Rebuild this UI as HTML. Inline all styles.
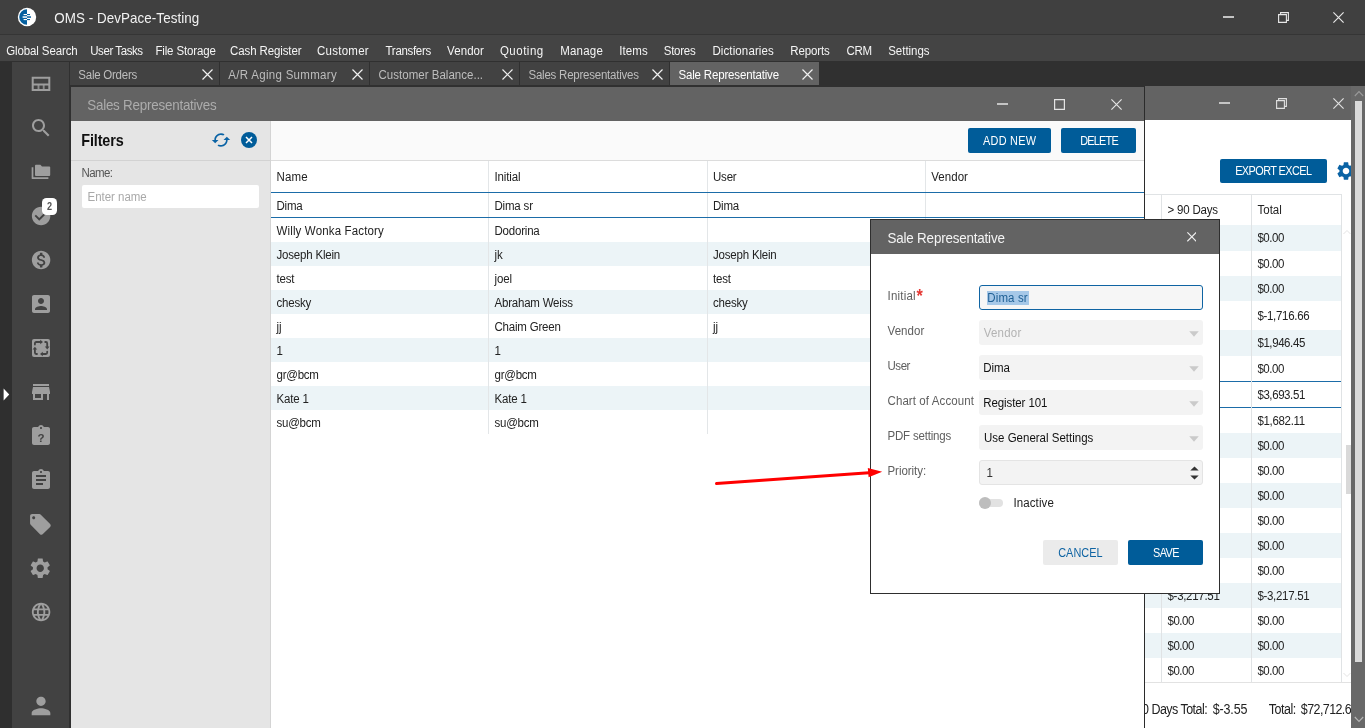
<!DOCTYPE html>
<html lang="en"><head><meta charset="utf-8"><title>OMS - DevPace-Testing</title>
<style>
html,body{margin:0;padding:0;}
html{background:#303030;}
body{width:1365px;height:728px;overflow:hidden;position:relative;background:#303030;font-family:"Liberation Sans",sans-serif;}
.layer{position:absolute;left:0;top:0;width:1365px;height:728px;overflow:hidden;will-change:transform;}
.r{position:absolute;display:block;}
.t{position:absolute;white-space:pre;line-height:20px;font-family:"Liberation Sans",sans-serif;}
</style></head>
<body>
<div class="layer" id="app-chrome">
<div class="r" style="left:0px;top:0px;width:1365px;height:34px;background:#404040;"></div>
<div class="r" style="left:0px;top:34px;width:1365px;height:1px;background:#353535;"></div>
<div class="r" style="left:0px;top:35px;width:1365px;height:26px;background:#444444;"></div>
<div class="r" style="left:0px;top:61px;width:1365px;height:667px;background:#303030;"></div>
<div class="r" style="left:0px;top:62px;width:12px;height:666px;background:#2f2f2f;"></div>
<div class="r" style="left:12px;top:62px;width:57px;height:666px;background:#424242;"></div>
<span class="t" style="left:54.2px;top:9.1px;font-size:13.4px;color:#f2f2f2;letter-spacing:0.07px;transform:scaleY(1.12);transform-origin:0 14.64px;">OMS - DevPace-Testing</span>
<span class="t" style="left:6.2px;top:41.0px;font-size:11.5px;color:#f5f5f5;letter-spacing:-0.11px;transform:scaleY(1.12);transform-origin:0 13.98px;">Global Search</span>
<span class="t" style="left:90.2px;top:41.0px;font-size:11.5px;color:#f5f5f5;letter-spacing:-0.42px;transform:scaleY(1.12);transform-origin:0 13.98px;">User Tasks</span>
<span class="t" style="left:155.4px;top:41.0px;font-size:11.5px;color:#f5f5f5;letter-spacing:-0.14px;transform:scaleY(1.12);transform-origin:0 13.98px;">File Storage</span>
<span class="t" style="left:230.1px;top:41.0px;font-size:11.5px;color:#f5f5f5;letter-spacing:-0.12px;transform:scaleY(1.12);transform-origin:0 13.98px;">Cash Register</span>
<span class="t" style="left:317.0px;top:41.0px;font-size:11.5px;color:#f5f5f5;letter-spacing:0.26px;transform:scaleY(1.12);transform-origin:0 13.98px;">Customer</span>
<span class="t" style="left:385.6px;top:41.0px;font-size:11.5px;color:#f5f5f5;letter-spacing:-0.32px;transform:scaleY(1.12);transform-origin:0 13.98px;">Transfers</span>
<span class="t" style="left:447.1px;top:41.0px;font-size:11.5px;color:#f5f5f5;letter-spacing:0.07px;transform:scaleY(1.12);transform-origin:0 13.98px;">Vendor</span>
<span class="t" style="left:499.9px;top:41.0px;font-size:11.5px;color:#f5f5f5;letter-spacing:0.50px;transform:scaleY(1.12);transform-origin:0 13.98px;">Quoting</span>
<span class="t" style="left:560.2px;top:41.0px;font-size:11.5px;color:#f5f5f5;letter-spacing:0.21px;transform:scaleY(1.12);transform-origin:0 13.98px;">Manage</span>
<span class="t" style="left:619.2px;top:41.0px;font-size:11.5px;color:#f5f5f5;letter-spacing:0.09px;transform:scaleY(1.12);transform-origin:0 13.98px;">Items</span>
<span class="t" style="left:663.8px;top:41.0px;font-size:11.5px;color:#f5f5f5;letter-spacing:-0.27px;transform:scaleY(1.12);transform-origin:0 13.98px;">Stores</span>
<span class="t" style="left:712.4px;top:41.0px;font-size:11.5px;color:#f5f5f5;letter-spacing:0.12px;transform:scaleY(1.12);transform-origin:0 13.98px;">Dictionaries</span>
<span class="t" style="left:790.3px;top:41.0px;font-size:11.5px;color:#f5f5f5;letter-spacing:-0.13px;transform:scaleY(1.12);transform-origin:0 13.98px;">Reports</span>
<span class="t" style="left:846.4px;top:41.0px;font-size:11.5px;color:#f5f5f5;letter-spacing:-0.27px;transform:scaleY(1.12);transform-origin:0 13.98px;">CRM</span>
<span class="t" style="left:888.2px;top:41.0px;font-size:11.5px;color:#f5f5f5;letter-spacing:-0.02px;transform:scaleY(1.12);transform-origin:0 13.98px;">Settings</span>
<div class="r" style="left:70px;top:62px;width:149px;height:23px;background:#424242;"></div>
<span class="t" style="left:78.3px;top:65.0px;font-size:11.5px;color:#bdbdbd;letter-spacing:-0.24px;transform:scaleY(1.12);transform-origin:0 13.98px;">Sale Orders</span>
<svg class="r" style="left:201.9px;top:68.5px" width="11" height="11" viewBox="0 0 11 11"><path d="M0.5 0.5L10.5 10.5M10.5 0.5L0.5 10.5" stroke="#f0f0f0" stroke-width="1.2" fill="none"/></svg>
<div class="r" style="left:220px;top:62px;width:149px;height:23px;background:#424242;"></div>
<span class="t" style="left:228.3px;top:65.0px;font-size:11.5px;color:#bdbdbd;letter-spacing:0.30px;transform:scaleY(1.12);transform-origin:0 13.98px;">A/R Aging Summary</span>
<svg class="r" style="left:351.9px;top:68.5px" width="11" height="11" viewBox="0 0 11 11"><path d="M0.5 0.5L10.5 10.5M10.5 0.5L0.5 10.5" stroke="#f0f0f0" stroke-width="1.2" fill="none"/></svg>
<div class="r" style="left:370px;top:62px;width:149px;height:23px;background:#424242;"></div>
<span class="t" style="left:378.5px;top:65.0px;font-size:11.5px;color:#bdbdbd;letter-spacing:0.02px;transform:scaleY(1.12);transform-origin:0 13.98px;">Customer Balance...</span>
<svg class="r" style="left:501.9px;top:68.5px" width="11" height="11" viewBox="0 0 11 11"><path d="M0.5 0.5L10.5 10.5M10.5 0.5L0.5 10.5" stroke="#f0f0f0" stroke-width="1.2" fill="none"/></svg>
<div class="r" style="left:520px;top:62px;width:149px;height:23px;background:#424242;"></div>
<span class="t" style="left:528.5px;top:65.0px;font-size:11.5px;color:#bdbdbd;letter-spacing:-0.23px;transform:scaleY(1.12);transform-origin:0 13.98px;">Sales Representatives</span>
<svg class="r" style="left:651.9px;top:68.5px" width="11" height="11" viewBox="0 0 11 11"><path d="M0.5 0.5L10.5 10.5M10.5 0.5L0.5 10.5" stroke="#f0f0f0" stroke-width="1.2" fill="none"/></svg>
<div class="r" style="left:670px;top:62px;width:149px;height:23px;background:#636363;"></div>
<span class="t" style="left:678.4px;top:65.0px;font-size:11.5px;color:#ffffff;letter-spacing:-0.16px;transform:scaleY(1.12);transform-origin:0 13.98px;">Sale Representative</span>
<svg class="r" style="left:801.9px;top:68.5px" width="11" height="11" viewBox="0 0 11 11"><path d="M0.5 0.5L10.5 10.5M10.5 0.5L0.5 10.5" stroke="#f0f0f0" stroke-width="1.2" fill="none"/></svg>
<div class="r" style="left:1223.2px;top:16.2px;width:10.5px;height:1.7px;background:#c4c4c4"></div>
<svg class="r" style="left:1278px;top:11.5px" width="11" height="11" viewBox="0 0 11 11"><path d="M0.6 2.6h7.8v7.8h-7.8z M2.6 2.6v-2h7.8v7.8h-2" stroke="#e8e8e8" stroke-width="1.1" fill="none"/></svg>
<svg class="r" style="left:1333.2px;top:11.5px" width="11" height="11" viewBox="0 0 11 11"><path d="M0.4 0.4L10.6 10.6M10.6 0.4L0.4 10.6" stroke="#e8e8e8" stroke-width="1.15" fill="none"/></svg>
<svg class="r" style="left:17px;top:7px" width="20" height="20" viewBox="0 0 20 20">
<circle cx="10" cy="10" r="9.2" fill="#fff"/>
<path d="M10 2.2A7.8 7.8 0 0 0 10 17.8Z" fill="#0560a0"/>
<rect x="6.6" y="7" width="3.4" height="1.1" fill="#fff"/><rect x="10" y="7" width="3" height="1.1" fill="#0560a0"/>
<rect x="5.6" y="9.3" width="4.4" height="1.5" fill="#fff"/><rect x="10" y="9.3" width="4" height="1.5" fill="#0560a0"/>
<rect x="6.6" y="12" width="3.4" height="1.1" fill="#fff"/><rect x="10" y="12" width="3" height="1.1" fill="#0560a0"/>
</svg>
<svg class="r" style="left:28.6px;top:72.0px" width="24" height="24" viewBox="0 0 24 24" fill="#9e9e9e"><path d="M3.7 5.8h16.6v12.3H3.7z M3.7 12.4h16.6" fill="none" stroke="#9e9e9e" stroke-width="2"/><path d="M9.5 12.4v5.7 M14.7 12.4v5.7" fill="none" stroke="#9e9e9e" stroke-width="1.9" opacity="0.8"/></svg>
<svg class="r" style="left:28.6px;top:116.0px" width="24" height="24" viewBox="0 0 24 24" fill="#9e9e9e"><path d="M15.5 14h-.79l-.28-.27C15.41 12.59 16 11.11 16 9.5 16 5.91 13.09 3 9.5 3S3 5.91 3 9.5 5.91 16 9.5 16c1.61 0 3.09-.59 4.23-1.57l.27.28v.79l5 4.99L20.49 19l-4.99-5zm-6 0C7.01 14 5 11.99 5 9.5S7.01 5 9.5 5 14 7.01 14 9.5 11.99 14 9.5 14z"/></svg>
<svg class="r" style="left:28.6px;top:160.0px" width="24" height="24" viewBox="0 0 24 24" fill="#9e9e9e"><path d="M3.5 7.2V18.2H19.4" fill="none" stroke="#9e9e9e" stroke-width="1.7" stroke-linejoin="round"/><path d="M6 5.7Q6 4.8 6.9 4.8H11.4L13 6.4H20.3Q21.2 6.4 21.2 7.3V15.1Q21.2 16 20.3 16H6.9Q6 16 6 15.1Z"/></svg>
<svg class="r" style="left:29.5px;top:204.9px" width="22.2" height="22.2" viewBox="0 0 24 24" fill="#9e9e9e"><path d="M12 2C6.48 2 2 6.48 2 12s4.48 10 10 10 10-4.48 10-10S17.52 2 12 2zm-2 15l-5-5 1.41-1.41L10 14.17l7.59-7.59L19 8l-9 9z"/></svg>
<svg class="r" style="left:29.5px;top:248.9px" width="22.2" height="22.2" viewBox="0 0 24 24" fill="#9e9e9e"><path d="M12 2C6.48 2 2 6.48 2 12s4.48 10 10 10 10-4.48 10-10S17.52 2 12 2zm1.41 16.09V20h-2.67v-1.93c-1.71-.36-3.16-1.46-3.27-3.4h1.96c.1 1.05.82 1.87 2.65 1.87 1.96 0 2.4-.98 2.4-1.59 0-.83-.44-1.61-2.67-2.14-2.48-.6-4.18-1.62-4.18-3.67 0-1.72 1.39-2.84 3.11-3.21V4h2.67v1.95c1.86.45 2.79 1.86 2.85 3.39H14.3c-.05-1.11-.64-1.87-2.22-1.87-1.5 0-2.4.68-2.4 1.64 0 .84.65 1.39 2.67 1.91s4.18 1.39 4.18 3.91c-.01 1.83-1.38 2.83-3.12 3.16z"/></svg>
<svg class="r" style="left:28.6px;top:292.0px" width="24" height="24" viewBox="0 0 24 24" fill="#9e9e9e"><path d="M3 5v14c0 1.1.89 2 2 2h14c1.1 0 2-.9 2-2V5c0-1.1-.9-2-2-2H5c-1.11 0-2 .9-2 2zm12 4c0 1.66-1.34 3-3 3s-3-1.34-3-3 1.34-3 3-3 3 1.34 3 3zm-9 8c0-2 4-3.1 6-3.1s6 1.1 6 3.1v1H6v-1z"/></svg>
<svg class="r" style="left:28.6px;top:336.0px" width="24" height="24" viewBox="0 0 24 24" fill="#9e9e9e"><rect x="3" y="3" width="18" height="18" rx="2"/><g stroke="#424242" stroke-width="1.8" fill="none" stroke-linecap="round" stroke-linejoin="round"><path d="M5.9 8.6V7.4Q5.9 6 7.3 6H11.4"/><path d="M16.2 6H16.9Q18.2 6 18.2 7.4V11"/><path d="M18.2 15.6V16.6Q18.2 18 16.8 18H13.6"/><path d="M8 18H7.3Q5.9 18 5.9 16.6V13.4"/></g><g fill="#424242"><path d="M11.2 3.7L14 6L11.2 8.3Z"/><path d="M15.9 10.6L18.2 13.4L20.5 10.6Z"/><path d="M13.8 15.7L11 18L13.8 20.3Z"/><path d="M3.6 13.6L5.9 10.8L8.2 13.6Z"/></g></svg>
<svg class="r" style="left:28.6px;top:380.0px" width="24" height="24" viewBox="0 0 24 24" fill="#9e9e9e"><path d="M20 4H4v2h16V4zm1 10v-2l-1-5H4l-1 5v2h1v6h10v-6h4v6h2v-6h1zm-9 4H6v-4h6v4z"/></svg>
<svg class="r" style="left:28.6px;top:424.0px" width="24" height="24" viewBox="0 0 24 24" fill="#9e9e9e"><path d="M19 3h-4.18C14.4 1.84 13.3 1 12 1c-1.3 0-2.4.84-2.82 2H5c-1.1 0-2 .9-2 2v14c0 1.1.9 2 2 2h14c1.1 0 2-.9 2-2V5c0-1.1-.9-2-2-2zm-7 0c.55 0 1 .45 1 1s-.45 1-1 1-1-.45-1-1 .45-1 1-1z"/><text x="12" y="17.6" text-anchor="middle" font-family="Liberation Sans, sans-serif" font-weight="700" font-size="11.5" fill="#424242">?</text></svg>
<svg class="r" style="left:28.6px;top:468.0px" width="24" height="24" viewBox="0 0 24 24" fill="#9e9e9e"><path d="M19 3h-4.18C14.4 1.84 13.3 1 12 1c-1.3 0-2.4.84-2.82 2H5c-1.1 0-2 .9-2 2v14c0 1.1.9 2 2 2h14c1.1 0 2-.9 2-2V5c0-1.1-.9-2-2-2zm-7 0c.55 0 1 .45 1 1s-.45 1-1 1-1-.45-1-1 .45-1 1-1zm2 14H7v-2h7v2zm3-4H7v-2h10v2zm0-4H7V7h10v2z"/></svg>
<svg class="r" style="left:28.2px;top:511.6px" width="24.8" height="24.8" viewBox="0 0 24 24" fill="#9e9e9e"><path d="M21.41 11.58l-9-9C12.05 2.22 11.55 2 11 2H4c-1.1 0-2 .9-2 2v7c0 .55.22 1.05.59 1.42l9 9c.36.36.86.58 1.41.58.55 0 1.05-.22 1.41-.59l7-7c.37-.36.59-.86.59-1.41 0-.55-.23-1.06-.59-1.42zM5.5 7C4.67 7 4 6.33 4 5.5S4.67 4 5.5 4 7 4.67 7 5.5 6.33 7 5.5 7z"/></svg>
<svg class="r" style="left:28.4px;top:555.8px" width="24.5" height="24.5" viewBox="0 0 24 24" fill="#9e9e9e"><path d="M19.14 12.94c.04-.3.06-.61.06-.94 0-.32-.02-.64-.07-.94l2.03-1.58c.18-.14.23-.41.12-.61l-1.92-3.32c-.12-.22-.37-.29-.59-.22l-2.39.96c-.5-.38-1.03-.7-1.62-.94l-.36-2.54c-.04-.24-.24-.41-.48-.41h-3.84c-.24 0-.43.17-.47.41l-.36 2.54c-.59.24-1.13.57-1.62.94l-2.39-.96c-.22-.08-.47 0-.59.22L2.74 8.87c-.12.21-.08.47.12.61l2.03 1.58c-.05.3-.09.63-.09.94s.02.64.07.94l-2.03 1.58c-.18.14-.23.41-.12.61l1.92 3.32c.12.22.37.29.59.22l2.39-.96c.5.38 1.03.7 1.62.94l.36 2.54c.05.24.24.41.48.41h3.84c.24 0 .44-.17.47-.41l.36-2.54c.59-.24 1.13-.56 1.62-.94l2.39.96c.22.08.47 0 .59-.22l1.92-3.32c.12-.22.07-.47-.12-.61l-2.01-1.58zM12 15.6c-1.98 0-3.6-1.62-3.6-3.6s1.62-3.6 3.6-3.6 3.6 1.62 3.6 3.6-1.62 3.6-3.6 3.6z"/></svg>
<svg class="r" style="left:29.5px;top:600.9px" width="22.2" height="22.2" viewBox="0 0 24 24" fill="#9e9e9e"><path d="M11.99 2C6.47 2 2 6.48 2 12s4.47 10 9.99 10C17.52 22 22 17.52 22 12S17.52 2 11.99 2zm6.93 6h-2.95c-.32-1.25-.78-2.45-1.38-3.56 1.84.63 3.37 1.91 4.33 3.56zM12 4.04c.83 1.2 1.48 2.53 1.91 3.96h-3.82c.43-1.43 1.08-2.76 1.91-3.96zM4.26 14C4.1 13.36 4 12.69 4 12s.1-1.36.26-2h3.38c-.08.66-.14 1.32-.14 2 0 .68.06 1.34.14 2H4.26zm.82 2h2.95c.32 1.25.78 2.45 1.38 3.56-1.84-.63-3.37-1.9-4.33-3.56zm2.95-8H5.08c.96-1.66 2.49-2.93 4.33-3.56C8.81 5.55 8.35 6.75 8.03 8zM12 19.96c-.83-1.2-1.48-2.53-1.91-3.96h3.82c-.43 1.43-1.08 2.76-1.91 3.96zM14.34 14H9.66c-.09-.66-.16-1.32-.16-2 0-.68.07-1.35.16-2h4.68c.09.65.16 1.32.16 2 0 .68-.07 1.34-.16 2zm.25 5.56c.6-1.11 1.06-2.31 1.38-3.56h2.95c-.96 1.65-2.49 2.93-4.33 3.56zM16.36 14c.08-.66.14-1.32.14-2 0-.68-.06-1.34-.14-2h3.38c.16.64.26 1.31.26 2s-.1 1.36-.26 2h-3.38z"/></svg>
<svg class="r" style="left:26.7px;top:692.0px" width="28" height="28" viewBox="0 0 24 24" fill="#9e9e9e"><path d="M12 12c2.21 0 4-1.79 4-4s-1.79-4-4-4-4 1.79-4 4 1.79 4 4 4zm0 2c-2.67 0-8 1.34-8 4v2h16v-2c0-2.66-5.33-4-8-4z"/></svg>
<div class="r" style="left:42px;top:198px;width:15px;height:17px;background:#ffffff;border-radius:4.5px;"></div>
<span class="t" style="left:47.1px;top:196.6px;font-size:9.1px;color:#555;letter-spacing:-0.26px;font-weight:700;transform:scaleY(1.12);transform-origin:0 13.15px;">2</span>
<svg class="r" style="left:2.5px;top:388px" width="7" height="13" viewBox="0 0 7 13"><path d="M0.6 0.6L6.2 6.5L0.6 12.4Z" fill="#fff"/></svg>
</div>
<div class="layer" id="window-aging">
<div class="r" style="left:1145px;top:86px;width:207px;height:642px;background:#ffffff;"></div>
<div class="r" style="left:1145px;top:86px;width:207px;height:34px;background:#636363;"></div>
<div class="r" style="left:1219.3px;top:102.2px;width:10.5px;height:1.7px;background:#c4c4c4"></div>
<svg class="r" style="left:1276.2px;top:97.5px" width="11" height="11" viewBox="0 0 11 11"><path d="M0.6 2.6h7.8v7.8h-7.8z M2.6 2.6v-2h7.8v7.8h-2" stroke="#e0e0e0" stroke-width="1.1" fill="none"/></svg>
<svg class="r" style="left:1333.4px;top:97.5px" width="11" height="11" viewBox="0 0 11 11"><path d="M0.4 0.4L10.6 10.6M10.6 0.4L0.4 10.6" stroke="#e0e0e0" stroke-width="1.15" fill="none"/></svg>
<div class="r" style="left:1220px;top:158.6px;width:107px;height:24.5px;background:#005c99;border-radius:2px;"></div>
<span class="t" style="left:1235.2px;top:161.1px;font-size:10.9px;color:#fff;letter-spacing:-0.58px;transform:scaleY(1.12);transform-origin:0 13.78px;">EXPORT EXCEL</span>
<svg class="r" style="left:1334.5px;top:160.0px" width="22" height="22" viewBox="0 0 24 24" fill="#0a63a5"><path d="M19.14 12.94c.04-.3.06-.61.06-.94 0-.32-.02-.64-.07-.94l2.03-1.58c.18-.14.23-.41.12-.61l-1.92-3.32c-.12-.22-.37-.29-.59-.22l-2.39.96c-.5-.38-1.03-.7-1.62-.94l-.36-2.54c-.04-.24-.24-.41-.48-.41h-3.84c-.24 0-.43.17-.47.41l-.36 2.54c-.59.24-1.13.57-1.62.94l-2.39-.96c-.22-.08-.47 0-.59.22L2.74 8.87c-.12.21-.08.47.12.61l2.03 1.58c-.05.3-.09.63-.09.94s.02.64.07.94l-2.03 1.58c-.18.14-.23.41-.12.61l1.92 3.32c.12.22.37.29.59.22l2.39-.96c.5.38 1.03.7 1.62.94l.36 2.54c.05.24.24.41.48.41h3.84c.24 0 .44-.17.47-.41l.36-2.54c.59-.24 1.13-.56 1.62-.94l2.39.96c.22.08.47 0 .59-.22l1.92-3.32c.12-.22.07-.47-.12-.61l-2.01-1.58zM12 15.6c-1.98 0-3.6-1.62-3.6-3.6s1.62-3.6 3.6-3.6 3.6 1.62 3.6 3.6-1.62 3.6-3.6 3.6z"/></svg>
<div class="r" style="left:1145px;top:194px;width:197px;height:1px;background:#e0e3e5;"></div>
<div class="r" style="left:1145px;top:225px;width:197px;height:1px;background:#e0e3e5;"></div>
<div class="r" style="left:1145px;top:225px;width:197px;height:26px;background:#ecf4f7;"></div>
<span class="t" style="left:1257.4px;top:228.4px;font-size:11.5px;color:#222;letter-spacing:-0.46px;transform:scaleY(1.12);transform-origin:0 13.98px;">$0.00</span>
<span class="t" style="left:1257.4px;top:253.9px;font-size:11.5px;color:#222;letter-spacing:-0.46px;transform:scaleY(1.12);transform-origin:0 13.98px;">$0.00</span>
<div class="r" style="left:1145px;top:276px;width:197px;height:25px;background:#ecf4f7;"></div>
<span class="t" style="left:1257.4px;top:278.9px;font-size:11.5px;color:#222;letter-spacing:-0.46px;transform:scaleY(1.12);transform-origin:0 13.98px;">$0.00</span>
<span class="t" style="left:1257.4px;top:305.9px;font-size:11.5px;color:#222;letter-spacing:-0.30px;transform:scaleY(1.12);transform-origin:0 13.98px;">$-1,716.66</span>
<div class="r" style="left:1145px;top:330px;width:197px;height:26px;background:#ecf4f7;"></div>
<span class="t" style="left:1257.4px;top:333.4px;font-size:11.5px;color:#222;letter-spacing:-0.41px;transform:scaleY(1.12);transform-origin:0 13.98px;">$1,946.45</span>
<span class="t" style="left:1257.4px;top:358.9px;font-size:11.5px;color:#222;letter-spacing:-0.46px;transform:scaleY(1.12);transform-origin:0 13.98px;">$0.00</span>
<div class="r" style="left:1145px;top:381px;width:197px;height:1px;background:#1b6ca8;"></div>
<div class="r" style="left:1145px;top:407px;width:197px;height:1px;background:#1b6ca8;"></div>
<span class="t" style="left:1257.4px;top:384.9px;font-size:11.5px;color:#222;letter-spacing:-0.41px;transform:scaleY(1.12);transform-origin:0 13.98px;">$3,693.51</span>
<span class="t" style="left:1257.4px;top:410.9px;font-size:11.5px;color:#222;letter-spacing:-0.31px;transform:scaleY(1.12);transform-origin:0 13.98px;">$1,682.11</span>
<div class="r" style="left:1145px;top:433px;width:197px;height:25px;background:#ecf4f7;"></div>
<span class="t" style="left:1257.4px;top:435.9px;font-size:11.5px;color:#222;letter-spacing:-0.46px;transform:scaleY(1.12);transform-origin:0 13.98px;">$0.00</span>
<span class="t" style="left:1257.4px;top:460.9px;font-size:11.5px;color:#222;letter-spacing:-0.46px;transform:scaleY(1.12);transform-origin:0 13.98px;">$0.00</span>
<div class="r" style="left:1145px;top:483px;width:197px;height:25px;background:#ecf4f7;"></div>
<span class="t" style="left:1257.4px;top:485.9px;font-size:11.5px;color:#222;letter-spacing:-0.46px;transform:scaleY(1.12);transform-origin:0 13.98px;">$0.00</span>
<span class="t" style="left:1257.4px;top:510.9px;font-size:11.5px;color:#222;letter-spacing:-0.46px;transform:scaleY(1.12);transform-origin:0 13.98px;">$0.00</span>
<div class="r" style="left:1145px;top:533px;width:197px;height:25px;background:#ecf4f7;"></div>
<span class="t" style="left:1257.4px;top:535.9px;font-size:11.5px;color:#222;letter-spacing:-0.46px;transform:scaleY(1.12);transform-origin:0 13.98px;">$0.00</span>
<span class="t" style="left:1257.4px;top:560.9px;font-size:11.5px;color:#222;letter-spacing:-0.46px;transform:scaleY(1.12);transform-origin:0 13.98px;">$0.00</span>
<div class="r" style="left:1145px;top:583px;width:197px;height:25px;background:#ecf4f7;"></div>
<span class="t" style="left:1257.4px;top:585.9px;font-size:11.5px;color:#222;letter-spacing:-0.30px;transform:scaleY(1.12);transform-origin:0 13.98px;">$-3,217.51</span>
<span class="t" style="left:1167.5px;top:585.9px;font-size:11.5px;color:#222;letter-spacing:-0.30px;transform:scaleY(1.12);transform-origin:0 13.98px;">$-3,217.51</span>
<span class="t" style="left:1257.4px;top:610.9px;font-size:11.5px;color:#222;letter-spacing:-0.46px;transform:scaleY(1.12);transform-origin:0 13.98px;">$0.00</span>
<span class="t" style="left:1167.5px;top:610.9px;font-size:11.5px;color:#222;letter-spacing:-0.46px;transform:scaleY(1.12);transform-origin:0 13.98px;">$0.00</span>
<div class="r" style="left:1145px;top:633px;width:197px;height:25px;background:#ecf4f7;"></div>
<span class="t" style="left:1257.4px;top:635.9px;font-size:11.5px;color:#222;letter-spacing:-0.46px;transform:scaleY(1.12);transform-origin:0 13.98px;">$0.00</span>
<span class="t" style="left:1167.5px;top:635.9px;font-size:11.5px;color:#222;letter-spacing:-0.46px;transform:scaleY(1.12);transform-origin:0 13.98px;">$0.00</span>
<span class="t" style="left:1257.4px;top:660.9px;font-size:11.5px;color:#222;letter-spacing:-0.46px;transform:scaleY(1.12);transform-origin:0 13.98px;">$0.00</span>
<span class="t" style="left:1167.5px;top:660.9px;font-size:11.5px;color:#222;letter-spacing:-0.46px;transform:scaleY(1.12);transform-origin:0 13.98px;">$0.00</span>
<div class="r" style="left:1161px;top:194px;width:1px;height:489px;background:#e0e3e5;"></div>
<div class="r" style="left:1251px;top:194px;width:1px;height:489px;background:#e0e3e5;"></div>
<div class="r" style="left:1341px;top:194px;width:1px;height:489px;background:#e0e3e5;"></div>
<div class="r" style="left:1145px;top:682px;width:207px;height:1px;background:#e2e2e2;"></div>
<span class="t" style="left:1167.4px;top:200.3px;font-size:11.5px;color:#222;letter-spacing:-0.18px;transform:scaleY(1.12);transform-origin:0 13.98px;">&gt; 90 Days</span>
<span class="t" style="left:1257.5px;top:200.3px;font-size:11.5px;color:#222;letter-spacing:0.00px;transform:scaleY(1.12);transform-origin:0 13.98px;">Total</span>
<span class="t" style="left:1135.6px;top:699.9px;font-size:12.5px;color:#222;letter-spacing:-0.53px;transform:scaleY(1.12);transform-origin:0 14.33px;">90 Days Total:</span>
<span class="t" style="left:1212.7px;top:699.9px;font-size:12.5px;color:#222;letter-spacing:-0.14px;transform:scaleY(1.12);transform-origin:0 14.33px;">$-3.55</span>
<span class="t" style="left:1268.8px;top:699.9px;font-size:12.5px;color:#222;letter-spacing:-0.50px;transform:scaleY(1.12);transform-origin:0 14.33px;">Total:</span>
<span class="t" style="left:1300.8px;top:699.9px;font-size:12.5px;color:#222;letter-spacing:-0.59px;transform:scaleY(1.12);transform-origin:0 14.33px;">$72,712.65</span>
<div class="r" style="left:1346px;top:445px;width:5.5px;height:49px;background:#d9d9d9;"></div>
<svg class="r" style="left:1343px;top:229px" width="8" height="6" viewBox="0 0 8 6"><path d="M0.5 5L4 1.5L7.5 5" stroke="#e3e3e3" stroke-width="1" fill="none"/></svg>
<svg class="r" style="left:1343px;top:672px" width="8" height="6" viewBox="0 0 8 6"><path d="M0.5 1L4 4.5L7.5 1" stroke="#e3e3e3" stroke-width="1" fill="none"/></svg>
</div>
<div class="layer" id="main-scrollbar">
<div class="r" style="left:1351px;top:86px;width:14px;height:642px;background:#686868;"></div>
<div class="r" style="left:1355px;top:101px;width:7px;height:561px;background:#dadada;"></div>
<svg class="r" style="left:1353.5px;top:90px" width="10" height="7" viewBox="0 0 10 7"><path d="M0.8 6L5 1.6L9.2 6" stroke="#9a9a9a" stroke-width="1.1" fill="none"/></svg>
<svg class="r" style="left:1353.5px;top:716px" width="10" height="7" viewBox="0 0 10 7"><path d="M0.8 1L5 5.4L9.2 1" stroke="#b5b5b5" stroke-width="1.1" fill="none"/></svg>
</div>
<div class="layer" id="window-salesreps">
<div class="r" style="left:71px;top:87px;width:1073px;height:641px;background:#ffffff;"></div>
<div class="r" style="left:1144px;top:86px;width:1px;height:642px;background:#2b2b2b;"></div>
<div class="r" style="left:71px;top:87px;width:1073px;height:34px;background:#636363;"></div>
<span class="t" style="left:87.2px;top:96.0px;font-size:13.4px;color:#acacac;letter-spacing:-0.22px;transform:scaleY(1.12);transform-origin:0 14.64px;">Sales Representatives</span>
<div class="r" style="left:997.3px;top:103.2px;width:10.5px;height:1.7px;background:#c4c4c4"></div>
<svg class="r" style="left:1053.8px;top:98.5px" width="11" height="11" viewBox="0 0 11 11"><path d="M0.6 0.6h9.8v9.8h-9.8z" stroke="#e4e4e4" stroke-width="1.2" fill="none"/></svg>
<svg class="r" style="left:1111.2px;top:98.5px" width="11" height="11" viewBox="0 0 11 11"><path d="M0.4 0.4L10.6 10.6M10.6 0.4L0.4 10.6" stroke="#e4e4e4" stroke-width="1.15" fill="none"/></svg>
<div class="r" style="left:71px;top:121px;width:199px;height:607px;background:#e5e5e5;"></div>
<div class="r" style="left:270px;top:121px;width:1px;height:607px;background:#d4d4d4;"></div>
<div class="r" style="left:71px;top:160px;width:199px;height:1px;background:#d2d2d2;"></div>
<span class="t" style="left:81.2px;top:131.0px;font-size:14.4px;color:#111;letter-spacing:-0.10px;font-weight:700;transform:scaleY(1.12);transform-origin:0 14.99px;">Filters</span>
<svg class="r" style="left:211px;top:130px" width="20" height="20" viewBox="0 0 24 24" fill="#0a63a5"><path d="M12 4V1L8 5l4 4V6c3.31 0 6 2.69 6 6 0 1.01-.25 1.97-.7 2.8l1.46 1.46C19.54 15.03 20 13.57 20 12c0-4.42-3.58-8-8-8zm0 14c-3.31 0-6-2.69-6-6 0-1.01.25-1.97.7-2.8L5.24 7.74C4.46 8.97 4 10.43 4 12c0 4.42 3.58 8 8 8v3l4-4-4-4v3z" transform="rotate(90 12 12)"/></svg>
<svg class="r" style="left:241px;top:132px" width="16" height="16" viewBox="0 0 16 16"><circle cx="8" cy="8" r="8" fill="#005c99"/><path d="M5 5L11 11M11 5L5 11" stroke="#fff" stroke-width="1.5" fill="none"/></svg>
<span class="t" style="left:81.4px;top:163.0px;font-size:11.5px;color:#555;letter-spacing:-0.56px;transform:scaleY(1.12);transform-origin:0 13.98px;">Name:</span>
<div class="r" style="left:82px;top:185px;width:177px;height:23px;background:#ffffff;border-radius:2px;"></div>
<span class="t" style="left:87.5px;top:187.4px;font-size:11.5px;color:#a9a9a9;letter-spacing:-0.02px;transform:scaleY(1.12);transform-origin:0 13.98px;">Enter name</span>
<div class="r" style="left:271px;top:121px;width:873px;height:39px;background:#fafafa;"></div>
<div class="r" style="left:271px;top:160px;width:873px;height:1px;background:#dcdcdc;"></div>
<div class="r" style="left:968px;top:128px;width:83px;height:25px;background:#005c99;border-radius:2px;"></div>
<div class="r" style="left:1061px;top:128px;width:75px;height:25px;background:#005c99;border-radius:2px;"></div>
<span class="t" style="left:983.0px;top:130.8px;font-size:10.9px;color:#fff;letter-spacing:0.27px;transform:scaleY(1.12);transform-origin:0 13.78px;">ADD NEW</span>
<span class="t" style="left:1080.2px;top:130.8px;font-size:10.9px;color:#fff;letter-spacing:-0.76px;transform:scaleY(1.12);transform-origin:0 13.78px;">DELETE</span>
<div class="r" style="left:271px;top:242px;width:873px;height:24px;background:#ecf4f7"></div>
<div class="r" style="left:271px;top:290px;width:873px;height:24px;background:#ecf4f7"></div>
<div class="r" style="left:271px;top:338px;width:873px;height:24px;background:#ecf4f7"></div>
<div class="r" style="left:271px;top:386px;width:873px;height:24px;background:#ecf4f7"></div>
<div class="r" style="left:488px;top:161px;width:1px;height:273px;background:#e3e6e8;"></div>
<div class="r" style="left:707px;top:161px;width:1px;height:273px;background:#e3e6e8;"></div>
<div class="r" style="left:925px;top:161px;width:1px;height:273px;background:#e3e6e8;"></div>
<span class="t" style="left:276.5px;top:167.0px;font-size:11.5px;color:#222;letter-spacing:0.15px;transform:scaleY(1.12);transform-origin:0 13.98px;">Name</span>
<span class="t" style="left:494.5px;top:167.0px;font-size:11.5px;color:#222;letter-spacing:-0.13px;transform:scaleY(1.12);transform-origin:0 13.98px;">Initial</span>
<span class="t" style="left:713.0px;top:167.0px;font-size:11.5px;color:#222;letter-spacing:-0.21px;transform:scaleY(1.12);transform-origin:0 13.98px;">User</span>
<span class="t" style="left:931.2px;top:167.0px;font-size:11.5px;color:#222;letter-spacing:0.06px;transform:scaleY(1.12);transform-origin:0 13.98px;">Vendor</span>
<div class="r" style="left:271px;top:192px;width:873px;height:1px;background:#1b6ca8;"></div>
<div class="r" style="left:271px;top:217px;width:873px;height:1px;background:#1b6ca8;"></div>
<span class="t" style="left:276.5px;top:196.0px;font-size:11.5px;color:#222;letter-spacing:-0.23px;transform:scaleY(1.12);transform-origin:0 13.98px;">Dima</span>
<span class="t" style="left:494.5px;top:196.0px;font-size:11.5px;color:#222;letter-spacing:-0.19px;transform:scaleY(1.12);transform-origin:0 13.98px;">Dima sr</span>
<span class="t" style="left:713.0px;top:196.0px;font-size:11.5px;color:#222;letter-spacing:-0.23px;transform:scaleY(1.12);transform-origin:0 13.98px;">Dima</span>
<span class="t" style="left:276.5px;top:220.5px;font-size:11.5px;color:#222;letter-spacing:0.15px;transform:scaleY(1.12);transform-origin:0 13.98px;">Willy Wonka Factory</span>
<span class="t" style="left:494.5px;top:220.5px;font-size:11.5px;color:#222;letter-spacing:-0.20px;transform:scaleY(1.12);transform-origin:0 13.98px;">Dodorina</span>
<span class="t" style="left:276.5px;top:244.5px;font-size:11.5px;color:#222;letter-spacing:-0.19px;transform:scaleY(1.12);transform-origin:0 13.98px;">Joseph Klein</span>
<span class="t" style="left:494.5px;top:244.5px;font-size:11.5px;color:#222;letter-spacing:-0.14px;transform:scaleY(1.12);transform-origin:0 13.98px;">jk</span>
<span class="t" style="left:713.0px;top:244.5px;font-size:11.5px;color:#222;letter-spacing:-0.19px;transform:scaleY(1.12);transform-origin:0 13.98px;">Joseph Klein</span>
<span class="t" style="left:276.5px;top:268.5px;font-size:11.5px;color:#222;letter-spacing:-0.16px;transform:scaleY(1.12);transform-origin:0 13.98px;">test</span>
<span class="t" style="left:494.5px;top:268.5px;font-size:11.5px;color:#222;letter-spacing:-0.15px;transform:scaleY(1.12);transform-origin:0 13.98px;">joel</span>
<span class="t" style="left:713.0px;top:268.5px;font-size:11.5px;color:#222;letter-spacing:-0.16px;transform:scaleY(1.12);transform-origin:0 13.98px;">test</span>
<span class="t" style="left:276.5px;top:292.5px;font-size:11.5px;color:#222;letter-spacing:-0.20px;transform:scaleY(1.12);transform-origin:0 13.98px;">chesky</span>
<span class="t" style="left:494.5px;top:292.5px;font-size:11.5px;color:#222;letter-spacing:-0.21px;transform:scaleY(1.12);transform-origin:0 13.98px;">Abraham Weiss</span>
<span class="t" style="left:713.0px;top:292.5px;font-size:11.5px;color:#222;letter-spacing:-0.20px;transform:scaleY(1.12);transform-origin:0 13.98px;">chesky</span>
<span class="t" style="left:276.5px;top:316.5px;font-size:11.5px;color:#222;letter-spacing:-0.09px;transform:scaleY(1.12);transform-origin:0 13.98px;">jj</span>
<span class="t" style="left:494.5px;top:316.5px;font-size:11.5px;color:#222;letter-spacing:-0.21px;transform:scaleY(1.12);transform-origin:0 13.98px;">Chaim Green</span>
<span class="t" style="left:713.0px;top:316.5px;font-size:11.5px;color:#222;letter-spacing:-0.09px;transform:scaleY(1.12);transform-origin:0 13.98px;">jj</span>
<span class="t" style="left:276.5px;top:340.5px;font-size:11.5px;color:#222;letter-spacing:-0.22px;transform:scaleY(1.12);transform-origin:0 13.98px;">1</span>
<span class="t" style="left:494.5px;top:340.5px;font-size:11.5px;color:#222;letter-spacing:-0.22px;transform:scaleY(1.12);transform-origin:0 13.98px;">1</span>
<span class="t" style="left:276.5px;top:364.5px;font-size:11.5px;color:#222;letter-spacing:-0.25px;transform:scaleY(1.12);transform-origin:0 13.98px;">gr@bcm</span>
<span class="t" style="left:494.5px;top:364.5px;font-size:11.5px;color:#222;letter-spacing:-0.25px;transform:scaleY(1.12);transform-origin:0 13.98px;">gr@bcm</span>
<span class="t" style="left:276.5px;top:388.5px;font-size:11.5px;color:#222;letter-spacing:-0.19px;transform:scaleY(1.12);transform-origin:0 13.98px;">Kate 1</span>
<span class="t" style="left:494.5px;top:388.5px;font-size:11.5px;color:#222;letter-spacing:-0.19px;transform:scaleY(1.12);transform-origin:0 13.98px;">Kate 1</span>
<span class="t" style="left:276.5px;top:412.5px;font-size:11.5px;color:#222;letter-spacing:-0.26px;transform:scaleY(1.12);transform-origin:0 13.98px;">su@bcm</span>
<span class="t" style="left:494.5px;top:412.5px;font-size:11.5px;color:#222;letter-spacing:-0.26px;transform:scaleY(1.12);transform-origin:0 13.98px;">su@bcm</span>
</div>
<div class="layer" id="dialog-salerep">
<div class="r" style="left:870px;top:219px;width:350px;height:375px;background:#ffffff;border:1px solid #2e2e2e;box-sizing:border-box;"></div>
<div class="r" style="left:871px;top:220px;width:348px;height:34px;background:#636363;"></div>
<span class="t" style="left:887.5px;top:228.7px;font-size:13.4px;color:#f4f4f4;letter-spacing:-0.18px;transform:scaleY(1.12);transform-origin:0 14.64px;">Sale Representative</span>
<svg class="r" style="left:1186.9px;top:232.3px" width="9.6" height="9.6" viewBox="0 0 11 11"><path d="M0.4 0.4L10.6 10.6M10.6 0.4L0.4 10.6" stroke="#f0f0f0" stroke-width="1.3" fill="none"/></svg>
<span class="t" style="left:887.5px;top:286.3px;font-size:11.5px;color:#5e5e5e;letter-spacing:0.21px;transform:scaleY(1.12);transform-origin:0 13.98px;">Initial</span>
<div class="r" style="left:979px;top:285px;width:224px;height:25px;background:#f6f6f6;border:1.5px solid #0f64a3;border-radius:3px;box-sizing:border-box;"></div>
<span class="t" style="left:887.5px;top:321.3px;font-size:11.5px;color:#5e5e5e;letter-spacing:0.09px;transform:scaleY(1.12);transform-origin:0 13.98px;">Vendor</span>
<div class="r" style="left:979px;top:320px;width:224px;height:25px;background:#f3f3f3;border-radius:3px;"></div>
<svg class="r" style="left:1189px;top:330.8px" width="10" height="6" viewBox="0 0 10 6"><path d="M0.2 0.3H9.8L5 5.8Z" fill="#cacaca"/></svg>
<span class="t" style="left:887.5px;top:356.3px;font-size:11.5px;color:#5e5e5e;letter-spacing:-0.45px;transform:scaleY(1.12);transform-origin:0 13.98px;">User</span>
<div class="r" style="left:979px;top:355px;width:224px;height:25px;background:#f3f3f3;border-radius:3px;"></div>
<svg class="r" style="left:1189px;top:365.8px" width="10" height="6" viewBox="0 0 10 6"><path d="M0.2 0.3H9.8L5 5.8Z" fill="#cacaca"/></svg>
<span class="t" style="left:887.5px;top:391.3px;font-size:11.5px;color:#5e5e5e;letter-spacing:0.09px;transform:scaleY(1.12);transform-origin:0 13.98px;">Chart of Account</span>
<div class="r" style="left:979px;top:390px;width:224px;height:25px;background:#f3f3f3;border-radius:3px;"></div>
<svg class="r" style="left:1189px;top:400.8px" width="10" height="6" viewBox="0 0 10 6"><path d="M0.2 0.3H9.8L5 5.8Z" fill="#cacaca"/></svg>
<span class="t" style="left:887.5px;top:426.3px;font-size:11.5px;color:#5e5e5e;letter-spacing:-0.19px;transform:scaleY(1.12);transform-origin:0 13.98px;">PDF settings</span>
<div class="r" style="left:979px;top:425px;width:224px;height:25px;background:#f3f3f3;border-radius:3px;"></div>
<svg class="r" style="left:1189px;top:435.8px" width="10" height="6" viewBox="0 0 10 6"><path d="M0.2 0.3H9.8L5 5.8Z" fill="#cacaca"/></svg>
<span class="t" style="left:887.5px;top:461.3px;font-size:11.5px;color:#5e5e5e;letter-spacing:-0.05px;transform:scaleY(1.12);transform-origin:0 13.98px;">Priority:</span>
<div class="r" style="left:979px;top:460px;width:224px;height:25px;background:#f3f3f3;border:1px solid #e4e4e4;border-radius:3px;box-sizing:border-box;"></div>
<span class="t" style="left:916.5px;top:285.9px;font-size:16.3px;color:#e53935;letter-spacing:-0.22px;font-weight:700;transform:scaleY(1.12);transform-origin:0 15.65px;">*</span>
<div class="r" style="left:986.5px;top:290.5px;width:42px;height:14px;background:#a6c8e8;"></div>
<span class="t" style="left:987.3px;top:288.0px;font-size:11.5px;color:#1e5f94;letter-spacing:0.11px;transform:scaleY(1.12);transform-origin:0 13.98px;">Dima sr</span>
<span class="t" style="left:983.7px;top:323.0px;font-size:11.5px;color:#b3b3b3;letter-spacing:0.22px;transform:scaleY(1.12);transform-origin:0 13.98px;">Vendor</span>
<span class="t" style="left:983.2px;top:358.0px;font-size:11.5px;color:#111;letter-spacing:-0.01px;transform:scaleY(1.12);transform-origin:0 13.98px;">Dima</span>
<span class="t" style="left:983.2px;top:393.0px;font-size:11.5px;color:#111;letter-spacing:-0.08px;transform:scaleY(1.12);transform-origin:0 13.98px;">Register 101</span>
<span class="t" style="left:984.0px;top:428.0px;font-size:11.5px;color:#111;letter-spacing:0.00px;transform:scaleY(1.12);transform-origin:0 13.98px;">Use General Settings</span>
<span class="t" style="left:986.5px;top:463.0px;font-size:11.5px;color:#333;letter-spacing:-0.22px;transform:scaleY(1.12);transform-origin:0 13.98px;">1</span>
<svg class="r" style="left:1189.5px;top:465.5px" width="9" height="14" viewBox="0 0 9 14"><path d="M0.3 4.4L4.5 0.4L8.7 4.4Z M0.3 9.6L4.5 13.6L8.7 9.6Z" fill="#333"/></svg>
<div class="r" style="left:979px;top:499px;width:24px;height:8px;background:#e2e2e2;border-radius:4px;"></div>
<div class="r" style="left:979px;top:497px;width:12px;height:12px;background:#bdbdbd;border-radius:50%;"></div>
<span class="t" style="left:1013.4px;top:493.3px;font-size:11.5px;color:#222;letter-spacing:0.12px;transform:scaleY(1.12);transform-origin:0 13.98px;">Inactive</span>
<div class="r" style="left:1043px;top:540px;width:75px;height:24.5px;background:#ebebeb;border-radius:2px;"></div>
<div class="r" style="left:1128px;top:540px;width:75px;height:24.5px;background:#005c99;border-radius:2px;"></div>
<span class="t" style="left:1058.2px;top:542.8px;font-size:10.9px;color:#0f64a3;letter-spacing:0.05px;transform:scaleY(1.12);transform-origin:0 13.78px;">CANCEL</span>
<span class="t" style="left:1153.0px;top:542.8px;font-size:10.9px;color:#fff;letter-spacing:-0.61px;transform:scaleY(1.12);transform-origin:0 13.78px;">SAVE</span>
</div>
<div class="layer" id="annotation">
<svg class="r" style="left:700px;top:450px" width="200" height="50" viewBox="700 450 200 50"><path d="M716.5 483.6L869 472.7" stroke="#ff0000" stroke-width="3" stroke-linecap="round" fill="none"/><path d="M867.8 467.9L882.2 471.7L868.6 477.3Z" fill="#ff0000"/></svg>
</div>
</body></html>
